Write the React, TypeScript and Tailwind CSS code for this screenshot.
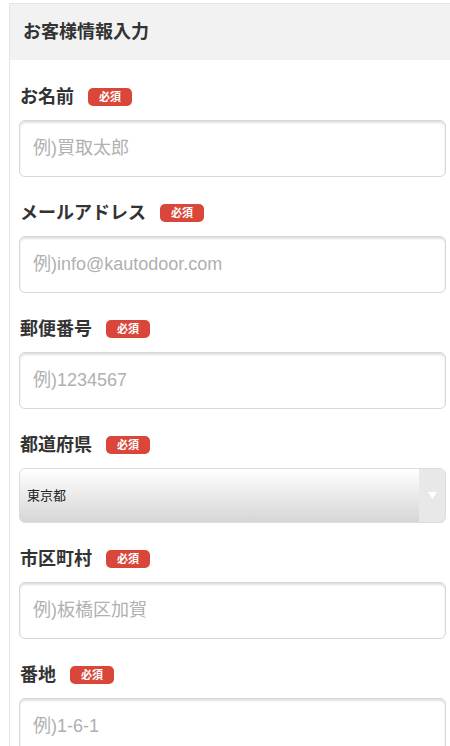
import React from "react";

const font = { fontFamily: '"Liberation Sans", "Noto Sans CJK JP", sans-serif' };

function Badge() {
  return (
    <span className="ml-[14px] inline-flex h-[18px] w-[44px] items-center justify-center rounded-[5px] bg-[#d9473b] text-[11px] font-bold leading-none text-white">
      必須
    </span>
  );
}

function Label({ text }: { text: string }) {
  return (
    <div className="flex h-[24px] items-center pl-[1px]">
      <span className="text-[18px] font-bold leading-none text-[#333]">{text}</span>
      <Badge />
    </div>
  );
}

function TextField({ label, placeholder }: { label: string; placeholder: string }) {
  return (
    <div className="flex flex-col">
      <Label text={label} />
      <input
        readOnly
        placeholder={placeholder}
        className="mt-[11px] h-[57px] w-full rounded-[6px] border border-[#d6d6d6] bg-white px-[13px] text-[18px] text-[#333] shadow-[inset_0_2px_2px_rgba(0,0,0,0.12)] outline-none placeholder:text-[#b0b0b0]"
        style={font}
      />
    </div>
  );
}

export default function App() {
  return (
    <div className="min-h-[746px] w-[450px] overflow-hidden bg-white" style={font}>
      <div className="ml-[9px] mt-[3px] border-l border-t border-[#e4e4e4]">
        <div className="flex h-[56px] items-center bg-[#f2f2f2] pl-[13px]">
          <span className="text-[18px] font-bold text-[#333]">お客様情報入力</span>
        </div>
        <div className="flex flex-col gap-[24px] pl-[9px] pr-[4px] pt-[25px]">
          <TextField label="お名前" placeholder="例)買取太郎" />
          <TextField label="メールアドレス" placeholder="例)info@kautodoor.com" />
          <TextField label="郵便番号" placeholder="例)1234567" />
          <div className="flex flex-col">
            <Label text="都道府県" />
            <div className="mt-[11px] flex h-[55px] w-full overflow-hidden rounded-[6px] border border-[#dcdcdc] bg-gradient-to-b from-white to-[#d6d6d6]">
              <div className="flex flex-1 items-center pl-[7px] text-[13px] text-[#222]">東京都</div>
              <div className="flex w-[26px] items-center justify-center bg-[#e8e8e8]">
                <svg width="9" height="7" viewBox="0 0 9 7">
                  <path d="M0 0 L9 0 L4.5 7 Z" fill="#ffffff" />
                </svg>
              </div>
            </div>
          </div>
          <TextField label="市区町村" placeholder="例)板橋区加賀" />
          <TextField label="番地" placeholder="例)1-6-1" />
        </div>
      </div>
    </div>
  );
}
